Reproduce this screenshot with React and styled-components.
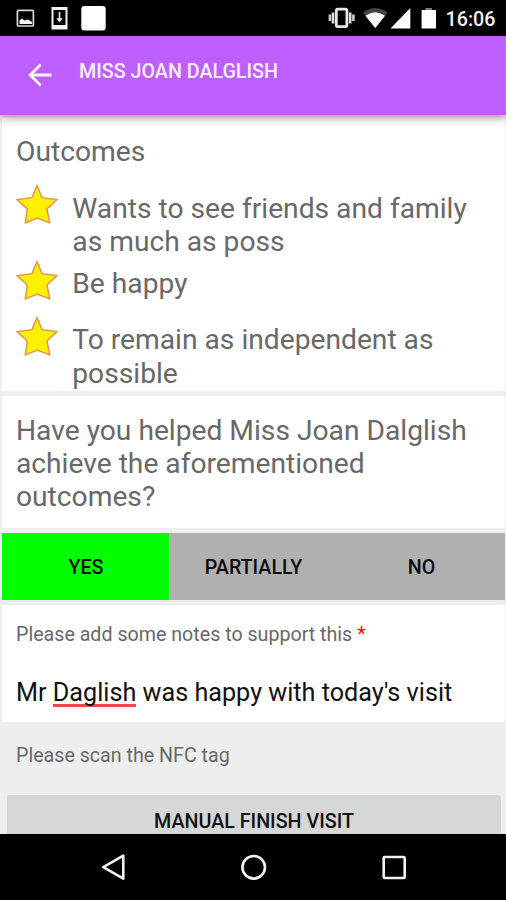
import { useState } from 'react';
import styled, { createGlobalStyle } from 'styled-components';

const colors = {
  primary: '#bd5eff',
  background: '#eeeeee',
  text: '#686868',
  yes: '#00ff00',
  option: '#b0b0b0',
  button: '#d6d8d7',
};

const GlobalStyle = createGlobalStyle`
  * {
    box-sizing: border-box;
  }
  body {
    margin: 0;
    font-family: Roboto, 'Liberation Sans', sans-serif;
  }
  svg {
    display: block;
    flex-shrink: 0;
  }
`;

const Screen = styled.div`
  display: flex;
  flex-direction: column;
  width: 506px;
  height: 900px;
  overflow: hidden;
  background-color: ${colors.background};
`;

const StatusBar = styled.div`
  display: flex;
  justify-content: space-between;
  height: 35.5px;
  flex-shrink: 0;
  background-color: #000;
`;

const Clock = styled.span`
  padding-top: 8px;
  margin-left: 8px;
  color: #f2f2f2;
  font-size: 19.7px;
  font-weight: 500;
  line-height: 24px;
`;

const StatusGroup = styled.div`
  display: flex;
  padding-right: 10.5px;
`;

const Header = styled.header`
  display: flex;
  align-items: center;
  height: 79px;
  flex-shrink: 0;
  padding-left: 27px;
  background-color: ${colors.primary};
  box-shadow: 0 3px 9px rgba(0, 0, 0, 0.35);
  z-index: 1;
`;

const BackButton = styled.button`
  padding: 0;
  border: 0;
  background: none;
`;

const Title = styled.h1`
  margin: 0 0 6px 27px;
  color: #f9f0ff;
  font-size: 19.7px;
  font-weight: 500;
  line-height: 24px;
`;

const Content = styled.main`
  display: flex;
  flex-direction: column;
  flex: 1;
  gap: 5px;
  min-height: 0;
  padding: 3.5px 1px 0 2px;
  overflow: hidden;
`;

const Card = styled.section`
  flex-shrink: 0;
  height: ${(props) => props.$height};
  padding: ${(props) => props.$padding};
  border-radius: 2px;
  background-color: #fff;
`;

const LargeText = styled.p`
  margin: 0;
  color: ${colors.text};
  font-size: 28.2px;
  line-height: 33.2px;
`;

const OutcomeList = styled.ul`
  margin: 16px 0 0;
  padding: 0;
  list-style: none;
`;

const Outcome = styled.li`
  display: flex;
  gap: 14.3px;
  min-height: 56.2px;
  padding-bottom: 1.6px;
  ${LargeText} {
    padding-top: 7.8px;
  }
`;

const Options = styled.div`
  display: grid;
  grid-template-columns: 167px 1fr 1fr;
  flex-shrink: 0;
  height: 67px;
  background-color: ${colors.option};
`;

const Option = styled.button`
  padding: 2px 0 0 1px;
  border: 0;
  background-color: ${(props) => (props.$selected ? colors.yes : 'transparent')};
  color: #0c0c0c;
  font-family: inherit;
  font-size: 19.7px;
  font-weight: 500;
`;

const Label = styled.p`
  margin: 0;
  color: ${colors.text};
  font-size: 19.65px;
  line-height: 23px;
`;

const Required = styled.span`
  color: #ff1010;
`;

const Note = styled.p`
  margin: 0;
  padding-top: 32px;
  color: #111;
  font-size: 25.2px;
  line-height: 30px;
`;

const Misspelt = styled.span`
  background: linear-gradient(#f4474d, #f4474d) left bottom / 100% 3px no-repeat;
`;

const Scan = styled.div`
  flex-shrink: 0;
  height: 63px;
  padding: 17px 14px 0;
`;

const FinishButton = styled.button`
  flex-shrink: 0;
  height: 51px;
  margin: 0 4px 0 5px;
  padding: 2px 0 0;
  border: 0;
  border-radius: 3px;
  background-color: ${colors.button};
  color: #111;
  font-family: inherit;
  font-size: 19.7px;
  font-weight: 500;
`;

const NavBar = styled.nav`
  display: flex;
  flex-shrink: 0;
  height: 66.5px;
  background-color: #000;
`;

const outcomes = [
  'Wants to see friends and family as much as poss',
  'Be happy',
  'To remain as independent as possible',
];

const answers = ['YES', 'PARTIALLY', 'NO'];

function Star() {
  return (
    <svg width="42" height="42" viewBox="0 0 42 42">
      <path
        d="M21 1.4 26 13.6 41 15.6 31 24.9 33.7 39 21.2 34.2 9.3 39 11.3 24.9 1 15.6 16 13.6Z"
        fill="#fff000"
        stroke="#e8904c"
        strokeWidth="1.4"
      />
    </svg>
  );
}

function NotificationIcons() {
  return (
    <svg width="120" height="35" viewBox="0 0 120 35">
      <rect x="17.4" y="10.4" width="16" height="15.6" rx="1" fill="none" stroke="#d8d8d8" strokeWidth="1.7" />
      <path d="M19.5 24V20.5L22 18.5L24.5 20.5L28 19.5L32 22V24Z" fill="#fff" />
      <path d="M51.5 7H67.5V29.5H51.5ZM53.5 10V25H65.5V10Z" fill="#f2f2f2" fillRule="evenodd" />
      <path d="M59.5 12V20" stroke="#eee" strokeWidth="1.6" />
      <path d="M56.3 18.3H62.7L59.5 22.5Z" fill="#eee" />
      <rect x="81.3" y="6" width="24.4" height="24.5" rx="3" fill="#fff" />
    </svg>
  );
}

function SystemIcons() {
  return (
    <svg width="110" height="35" viewBox="328 0 110 35">
      <rect x="336.3" y="9.2" width="10.6" height="17.4" rx="1.5" fill="none" stroke="#e8e8e8" strokeWidth="2.8" />
      <path d="M333 12.5V23.5M350.2 12.5V23.5" stroke="#ddd" strokeWidth="2.6" />
      <path d="M329.9 14.5V21M353.4 14.5V21" stroke="#ccc" strokeWidth="2.6" />
      <path d="M363 12.5Q375.3 3.5 387.5 12.5L375.3 28Z" fill="#444" />
      <path d="M365.5 15.8Q375.3 8.5 385 15.8L375.3 28Z" fill="#fff" />
      <path d="M410.3 8V28.5H390.5Z" fill="#fff" />
      <path d="M425.5 8H432V10H425.5Z" fill="#777" />
      <rect x="421.6" y="10" width="14.4" height="18.5" rx="0.6" fill="#fff" />
    </svg>
  );
}

function BackArrow() {
  return (
    <svg width="25" height="24" viewBox="0 0 25 24">
      <path d="M24.5 12H3M13.7 1.6 3.2 12 13.7 22.4" fill="none" stroke="#fdf6ff" strokeWidth="2.8" />
    </svg>
  );
}

function NavIcons() {
  return (
    <svg width="506" height="67" viewBox="0 833.5 506 67" fill="none" stroke="#f2f2f2" strokeWidth="2.6">
      <path d="M123.3 855.2V878.2L103.3 866.7Z" strokeLinejoin="round" />
      <circle cx="253.7" cy="866.8" r="11.3" />
      <rect x="383.7" y="856.5" width="21" height="21" rx="1" />
    </svg>
  );
}

export default function App() {
  const [answer, setAnswer] = useState('YES');

  return (
    <>
      <GlobalStyle />
      <Screen>
        <StatusBar>
          <NotificationIcons />
          <StatusGroup>
            <SystemIcons />
            <Clock>16:06</Clock>
          </StatusGroup>
        </StatusBar>
        <Header>
          <BackButton aria-label="Back">
            <BackArrow />
          </BackButton>
          <Title>MISS JOAN DALGLISH</Title>
        </Header>
        <Content>
          <Card $height="273px" $padding="16.5px 14px 0">
            <LargeText>Outcomes</LargeText>
            <OutcomeList>
              {outcomes.map((outcome) => (
                <Outcome key={outcome}>
                  <Star />
                  <LargeText>{outcome}</LargeText>
                </Outcome>
              ))}
            </OutcomeList>
          </Card>
          <Card $height="132px" $padding="18px 14px 0">
            <LargeText>
              Have you helped Miss Joan Dalglish achieve the aforementioned outcomes?
            </LargeText>
          </Card>
          <Options>
            {answers.map((name) => (
              <Option
                key={name}
                $selected={answer === name}
                onClick={() => setAnswer(name)}
              >
                {name}
              </Option>
            ))}
          </Options>
          <Card $height="117px" $padding="18px 14px 0">
            <Label>
              Please add some notes to support this <Required>*</Required>
            </Label>
            <Note>
              Mr <Misspelt>Daglish</Misspelt> was happy with today&apos;s visit
            </Note>
          </Card>
          <Scan>
            <Label>Please scan the NFC tag</Label>
          </Scan>
          <FinishButton>MANUAL FINISH VISIT</FinishButton>
        </Content>
        <NavBar>
          <NavIcons />
        </NavBar>
      </Screen>
    </>
  );
}
